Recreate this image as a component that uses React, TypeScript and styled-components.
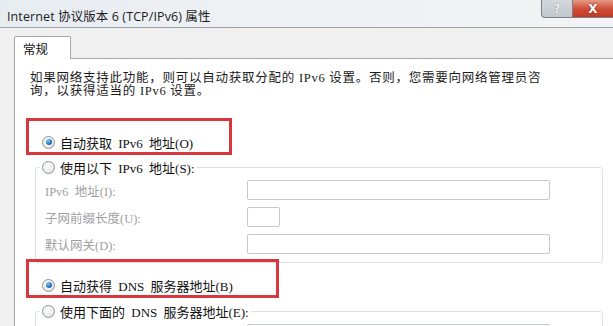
import styled, { createGlobalStyle, css } from "styled-components";

const GlobalStyle = createGlobalStyle`
  html, body {
    margin: 0;
    padding: 0;
    background: #f0f0f0;
    overflow: hidden;
  }
  body {
    font-family: "Liberation Serif", "Noto Sans CJK SC", serif;
  }
`;

const Window = styled.div`
  width: 613px;
  height: 326px;
  display: flex;
  flex-direction: column;
  background: #f0f0f0;
  overflow: hidden;
`;

const TitleBar = styled.div`
  height: 27px;
  flex: none;
  display: flex;
  align-items: flex-start;
  justify-content: space-between;
  background: linear-gradient(90deg, #e7ecf1 0%, #eef1f4 40%, #f1f3f5 100%);
  border-bottom: 1px solid #9ea3a8;
`;

const Title = styled.div`
  padding: 6px 0 0 7px;
  font-family: "Open Sans", "Noto Sans CJK SC", sans-serif;
  font-size: 12.5px;
  color: #1c1c1c;
  letter-spacing: 0.1px;
`;

const Caption = styled.div`
  display: flex;
`;

const captionButton = css`
  height: 17px;
  display: flex;
  align-items: center;
  justify-content: center;
  border: 1px solid #7b8088;
  border-top: none;
  font-family: "DejaVu Sans", sans-serif;
  font-weight: bold;
`;

const HelpButton = styled.div`
  ${captionButton};
  width: 30px;
  border-radius: 0 0 0 4px;
  background: linear-gradient(#d4d8dc, #c3c8cd);
  color: #f4f4f4;
  font-size: 12px;
  text-shadow: 0 0 1px #555;
`;

const CloseButton = styled.div`
  ${captionButton};
  width: 40px;
  border-left: none;
  border-right: none;
  background: linear-gradient(#e59a86, #cf4b35 55%, #c23a24);
  color: #fff;
  font-size: 12px;
  text-shadow: 0 0 2px #6b1a0e;
`;

const Body = styled.div`
  flex: 1;
  display: flex;
  flex-direction: column;
  padding: 8px 0 0 14px;
`;

const TabStrip = styled.div`
  display: flex;
  height: 22px;
  flex: none;
`;

const Tab = styled.div`
  width: 57px;
  height: 23px;
  box-sizing: border-box;
  background: #fff;
  border: 1px solid #a3a6ab;
  border-bottom: none;
  border-radius: 2px 2px 0 0;
  padding: 5px 0 0 8px;
  font-family: "Noto Sans CJK SC", sans-serif;
  font-size: 12.5px;
  line-height: 14px;
  color: #111;
  position: relative;
  z-index: 1;
`;

const Panel = styled.div`
  flex: 1;
  background: #fff;
  border-top: 1px solid #a3a6ab;
  border-left: 1px solid #a3a6ab;
  padding: 13px 0 0 15px;
  display: flex;
  flex-direction: column;
  font-size: 13px;
  color: #1a1a1a;
`;

const Description = styled.p`
  margin: 0;
  line-height: 13px;
  font-size: 12.5px;
  letter-spacing: 0.75px;
  white-space: nowrap;
`;

type Mark = { top: number; bottom: number; width: number };

const RadioRow = styled.label<{ $mark?: Mark; $inset?: boolean }>`
  position: relative;
  display: flex;
  align-items: center;
  gap: 5px;
  height: 16px;
  padding-left: ${(p) => (p.$inset ? "0" : "12px")};
  white-space: nowrap;
  font-size: 13px;
  color: #111;
  word-spacing: 3px;
  ${(p) =>
    p.$mark &&
    css`
      &::after {
        content: "";
        position: absolute;
        left: -4px;
        top: -${p.$mark.top}px;
        bottom: -${p.$mark.bottom}px;
        width: ${p.$mark.width}px;
        border: 3px solid #d9363e;
        pointer-events: none;
      }
    `}
`;

const Radio = styled.span<{ $checked?: boolean }>`
  width: 11px;
  height: 11px;
  flex: none;
  border-radius: 50%;
  border: 1px solid #8e9296;
  background: radial-gradient(circle at 40% 35%, #ffffff 0%, #e9ebed 60%, #d2d5d8 100%);
  display: flex;
  align-items: center;
  justify-content: center;
  &::before {
    content: "";
    width: 6px;
    height: 6px;
    border-radius: 50%;
    display: ${(p) => (p.$checked ? "block" : "none")};
    background: radial-gradient(circle at 35% 30%, #8cc8f0 0%, #2f7ec0 50%, #16487a 100%);
  }
`;

const Group = styled.fieldset`
  margin: 9px 10px 0 5px;
  padding: 0 0 8px 4px;
  border: 1px solid #dce2e6;
  border-radius: 3px;
  min-width: 0;
`;

const Legend = styled.legend`
  padding: 0 2px;
  margin: 0;
  background: #fff;
`;

const Fields = styled.div`
  display: grid;
  grid-template-columns: 202px 1fr;
  row-gap: 7px;
  padding: 5px 0 0 5px;
  align-items: center;
`;

const FieldLabel = styled.span`
  font-size: 12.5px;
  color: #a0a0a0;
  word-spacing: 3px;
  white-space: nowrap;
`;

const Input = styled.div<{ $narrow?: boolean }>`
  width: ${(p) => (p.$narrow ? "33px" : "303px")};
  height: 20px;
  box-sizing: border-box;
  border: 1px solid #c6c9cc;
  border-radius: 2px;
  background: #fff;
`;

export default function App() {
  return (
    <>
      <GlobalStyle />
      <Window>
        <TitleBar>
          <Title>Internet 协议版本 6 (TCP/IPv6) 属性</Title>
          <Caption>
            <HelpButton>?</HelpButton>
            <CloseButton>X</CloseButton>
          </Caption>
        </TitleBar>
        <Body>
          <TabStrip>
            <Tab>常规</Tab>
          </TabStrip>
          <Panel>
            <Description>
              如果网络支持此功能，则可以自动获取分配的 IPv6 设置。否则，您需要向网络管理员咨
              <br />
              询，以获得适当的 IPv6 设置。
            </Description>
            <RadioRow style={{ marginTop: 36 }} $mark={{ top: 16, bottom: 5, width: 200 }}>
              <Radio $checked />
              自动获取 IPv6 地址(O)
            </RadioRow>
            <Group>
              <Legend>
                <RadioRow $inset>
                  <Radio />
                  使用以下 IPv6 地址(S):
                </RadioRow>
              </Legend>
              <Fields>
                <FieldLabel>IPv6 地址(I):</FieldLabel>
                <Input />
                <FieldLabel>子网前缀长度(U):</FieldLabel>
                <Input $narrow />
                <FieldLabel>默认网关(D):</FieldLabel>
                <Input />
              </Fields>
            </Group>
            <RadioRow style={{ marginTop: 14 }} $mark={{ top: 18, bottom: 5, width: 247 }}>
              <Radio $checked />
              自动获得 DNS 服务器地址(B)
            </RadioRow>
            <Group style={{ marginTop: 10 }}>
              <Legend>
                <RadioRow $inset>
                  <Radio />
                  使用下面的 DNS 服务器地址(E):
                </RadioRow>
              </Legend>
              <Fields>
                <span />
                <Input />
              </Fields>
            </Group>
          </Panel>
        </Body>
      </Window>
    </>
  );
}
